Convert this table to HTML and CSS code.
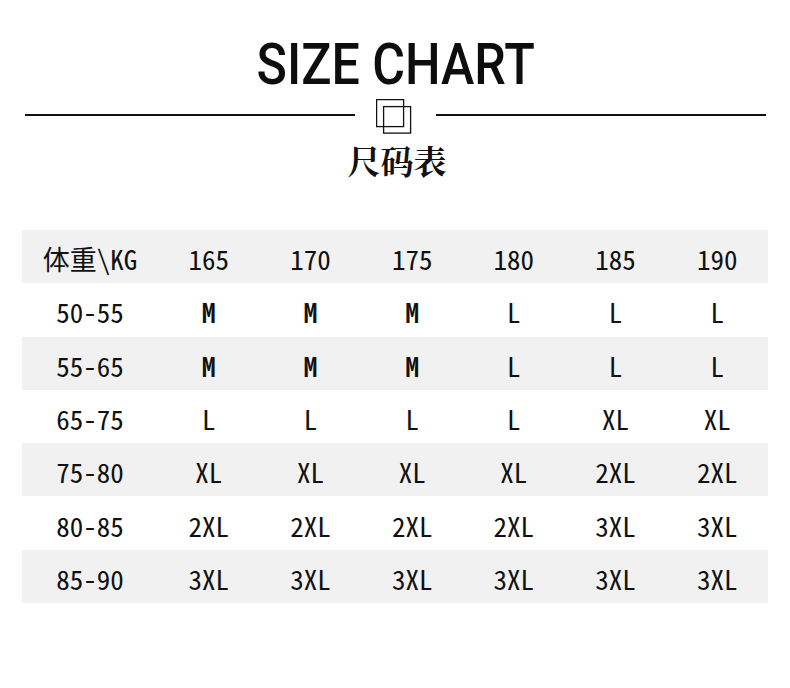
FILE: index.html
```html
<!DOCTYPE html>
<html lang="zh">
<head>
<meta charset="utf-8">
<title>Size Chart</title>
<link rel="stylesheet" href="styles.css">
</head>
<body>
<div class="page">
  <h1 class="title"><span class="title-text">SIZE CHART</span></h1>
  <div class="divider">
    <span class="rule"></span>
    <svg class="mark" width="36" height="35" viewBox="0 0 36 35" aria-hidden="true">
      <rect x="0.6" y="0.6" width="27" height="27" fill="none" stroke="#111" stroke-width="1.3"/>
      <rect x="7.6" y="7.6" width="27" height="26.5" fill="none" stroke="#111" stroke-width="1.3"/>
    </svg>
    <span class="rule"></span>
  </div>
  <div class="subtitle">尺码表</div>

  <div class="table">
    <div class="row band">
      <span>体重\KG</span><span>165</span><span>170</span><span>175</span><span>180</span><span>185</span><span>190</span>
    </div>
    <div class="row">
      <span>50-55</span><span class="b">M</span><span class="b">M</span><span class="b">M</span><span>L</span><span>L</span><span>L</span>
    </div>
    <div class="row band">
      <span>55-65</span><span class="b">M</span><span class="b">M</span><span class="b">M</span><span>L</span><span>L</span><span>L</span>
    </div>
    <div class="row">
      <span>65-75</span><span>L</span><span>L</span><span>L</span><span>L</span><span>XL</span><span>XL</span>
    </div>
    <div class="row band">
      <span>75-80</span><span>XL</span><span>XL</span><span>XL</span><span>XL</span><span>2XL</span><span>2XL</span>
    </div>
    <div class="row">
      <span>80-85</span><span>2XL</span><span>2XL</span><span>2XL</span><span>2XL</span><span>3XL</span><span>3XL</span>
    </div>
    <div class="row band">
      <span>85-90</span><span>3XL</span><span>3XL</span><span>3XL</span><span>3XL</span><span>3XL</span><span>3XL</span>
    </div>
  </div>
</div>
</body>
</html>
```

FILE: styles.css
```css
html, body {
  margin: 0;
  padding: 0;
  background: #ffffff;
}

.page {
  width: 790px;
  height: 688px;
  display: flex;
  flex-direction: column;
  color: #111;
}

.title {
  margin: 32px 0 0;
  font-family: Roboto, "Liberation Sans", Arial, sans-serif;
  font-weight: 500;
  font-size: 58px;
  line-height: 64px;
  text-align: center;
  color: #0d0d0d;
}

.title-text {
  display: inline-block;
  transform: scaleX(0.865);
  transform-origin: 50% 50%;
  padding-left: 2px;
}

.divider {
  margin-top: 3px;
  height: 35px;
  padding: 0 24px 0 25px;
  display: flex;
  align-items: flex-start;
}

.rule {
  flex: 1;
  height: 2px;
  margin-top: 15px;
  background: #111;
}

.mark {
  display: block;
  margin: 0 24px 0 21px;
}

.subtitle {
  margin-top: 6px;
  font-family: "Noto Serif CJK SC", "Noto Sans CJK SC", serif;
  font-weight: 700;
  font-size: 33px;
  line-height: 40px;
  text-align: center;
  padding-left: 4px;
  color: #111;
}

.table {
  margin: 50px 22px 0;
  display: flex;
  flex-direction: column;
}

.row {
  height: 53.3px;
  display: grid;
  grid-template-columns: 136px repeat(6, 1fr);
  align-items: center;
  font-family: "Noto Sans Mono CJK SC", "Noto Sans CJK SC", sans-serif;
  font-size: 27px;
  line-height: 30px;
  color: #111;
}

.row span {
  text-align: center;
  padding-top: 5px;
}

.band {
  background: #f1f1f1;
}

.b {
  font-weight: 700;
}
```
